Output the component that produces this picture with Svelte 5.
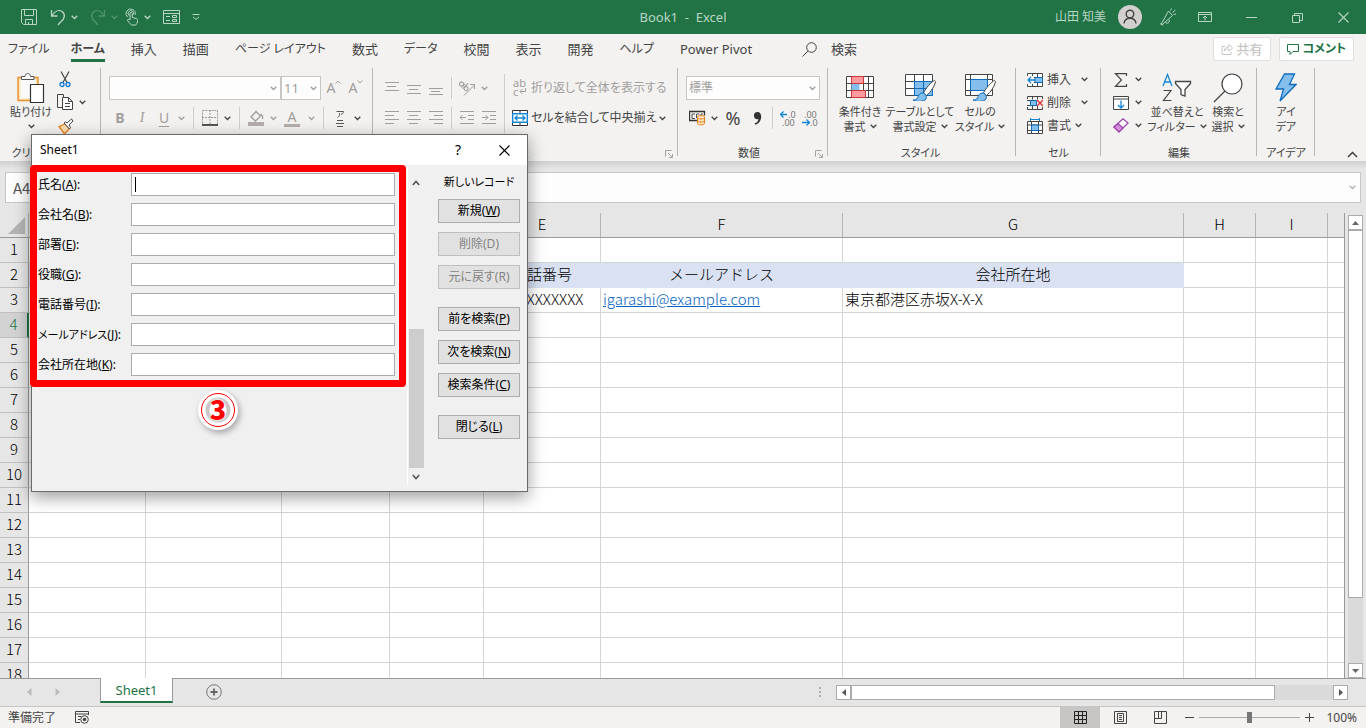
<script lang="ts">
  type Icon = { w: number; h: number; body: string };

  const alignIcon = (lines: [number, number, number][]): Icon => ({
    w: 14,
    h: 14,
    body: `<path stroke="currentColor" fill="none" d="${lines.map(([x, y, w]) => `M${x} ${y}.5h${w}`).join('')}"/>`
  });

  const tableGrid = (xs: number[], ys: number[]) =>
    `<path d="M.5.5h27v21H.5z${ys.map((y) => `M.5 ${y}.5h27`).join('')}${xs.map((x) => `M${x}.5.5v21`).join('')}" fill="#fff" stroke="#444"/>`;
  const brush = '<path d="M29.500 6.500c-3 1-9 8-11 12.500l3 2.500c4-3 8.500-10 9-14z" fill="#fff" stroke="#444"/><path d="M18.500 19c-4.500-.5-5 3-6 5-1 1.500-2.500 2-4.500 2 3 2 11 2 13-1 1-2 0-5-2.500-6z" fill="#83beec" stroke="#0f6cbd"/>';

  const icons: Record<string, Icon> = {
    save: { w: 18, h: 18, body: '<path d="M1.500 1.500h15v15h-13l-2-2zM4.500 1.500v6h9v-6M5.500 16.500v-5h7v5M8.500 14v2.500" fill="none" stroke="currentColor"/>' },
    undo: { w: 16, h: 18, body: '<path d="M1.500 2v6h6M2 7.500C5 3 9 1.500 12 3.500c3.500 2.500 3 7-1 10L8 17" fill="none" stroke="currentColor" stroke-width="1.300"/>' },
    redo: { w: 16, h: 18, body: '<path d="M14.500 2v6h-6M14 7.500C11 3 7 1.500 4 3.500c-3.500 2.500-3 7 1 10L8 17" fill="none" stroke="currentColor" stroke-width="1.300"/>' },
    touch: { w: 14, h: 18, body: '<path d="M2.500 9A4.600 4.600 0 1 1 10 7M4 7.500a2.800 2.800 0 1 1 4.500-1M5 12V5.500c0-1.500 2.300-1.500 2.300 0V9.500l4 1c1.200.3 1.200 1 1.200 2 0 2-1 4.500-2 4.500H6.500C5 16 3.500 14 2.500 12.500c0-1.500 1.500-1.500 2.500-.5z" fill="none" stroke="currentColor"/>' },
    form: { w: 17, h: 16, body: '<path d="M.5 1.500h16v13H.5zM.5 4.500h16M3 7.500h4M3 11.500h4M9.500 6.500h4v2h-4zM9.500 10.500h4v2h-4z" fill="none" stroke="currentColor"/>' },
    more: { w: 8, h: 7, body: '<path d="M.5.500h7M1 3l3 2.500L7 3" fill="none" stroke="currentColor"/>' },
    mega: { w: 18, h: 18, body: '<path d="M2 16.500 9.500 3l4 4.500L3.500 16.500zM1.500 15l2.500 2.500M6.500 13.500c.5 3 5 2 3.500-2M11.500 2.500l1-2M13.500 4.500l3-2.500M14.500 6.500l2.500-.5" fill="none" stroke="currentColor"/>' },
    ribbon: { w: 14, h: 12, body: '<path d="M.5 1.500h13v9H.5zM.5 3.500h13M7 9.500V5.500M5 7l2-2 2 2" fill="none" stroke="currentColor"/>' },
    min: { w: 11, h: 11, body: '<path d="M0 5.500h11" stroke="currentColor"/>' },
    restore: { w: 11, h: 11, body: '<path d="M.5 3.500h7v7h-7zM2.500 3.500v-2h8v7h-3" fill="none" stroke="currentColor"/>' },
    close: { w: 11, h: 11, body: '<path d="m.5.5 10 10M10.500.500l-10 10" stroke="currentColor" stroke-width="1.100"/>' },
    user: { w: 24, h: 24, body: '<circle cx="12" cy="12" r="12" fill="#d2d0ce"/><circle cx="12" cy="9" r="3.800" fill="none" stroke="#444" stroke-width="1.400"/><path d="M6 18.500c1-7 11-7 12 0" fill="none" stroke="#444" stroke-width="1.400"/>' },
    search: { w: 15, h: 15, body: '<circle cx="9.500" cy="5.500" r="4.800" fill="none" stroke="currentColor"/><path d="m6 9-5.500 5.500" stroke="currentColor"/>' },
    share: { w: 12, h: 12, body: '<path d="M4 3.500H1v8h9V9M3 8c.5-3 2.500-4 5-4V1.500l3.500 3.500L8 8.500V6C6 6 4.500 6.500 3 8z" fill="none" stroke="currentColor"/>' },
    comment: { w: 12, h: 11, body: '<path d="M.5.500h11v7H6l-3 3v-3H.5z" fill="none" stroke="currentColor"/>' },
    paste: { w: 28, h: 32, body: '<path d="M1 5.500h20v23H1z" fill="#fce4b8" stroke="#e8912d" stroke-width="1.400"/><path d="M3.500 7.500h15v19h-15z" fill="#fafafa"/><path d="M4.500 7.500v-3h3.500c0-4 5.500-4 5.500 0h3.500v3z" fill="#fafafa" stroke="#555"/><path d="M13.500 12.500h13v18h-13z" fill="#fff" stroke="#333" stroke-width="1.200"/>' },
    cut: { w: 12, h: 17, body: '<path d="m2 .5 6 11M10 .5 4 11.500" stroke="#444" stroke-width="1.200"/><circle cx="3" cy="13.500" r="2" fill="none" stroke="#0f78d4" stroke-width="1.300"/><circle cx="9" cy="13.500" r="2" fill="none" stroke="#0f78d4" stroke-width="1.300"/>' },
    copy: { w: 17, h: 17, body: '<path d="M5 13.500H.5V.500h6V3" fill="none" stroke="#444"/><path d="M5.500 3.500h6l4 4v8h-10zM11.500 3.500v4h4M8 9.500h5M8 12.500h5" fill="#fff" stroke="#444"/>' },
    painter: { w: 17, h: 16, body: '<path d="M2 8.500 8 6l4.500 4.500-5 5.500z" fill="#f9dcb0" stroke="#e8811c" stroke-width="1.300"/><path d="m7 5 5.500 6 1-1.500-1.500-2.500L16 3l-1.500-2L10 5 8.500 4z" fill="#fff" stroke="#444"/>' },
    borders: { w: 16, h: 16, body: '<path d="M.5.500h15v14H.5zM8 0v15M0 7.500h16" fill="none" stroke="#999" stroke-dasharray="2 1"/><path d="M0 15h16" stroke="#333" stroke-width="1.600"/>' },
    fill: { w: 16, h: 16, body: '<path d="M3 7 8 1.500l4.500 4.500-5 5zM8 2V.5M12.500 4.500c2 .5 2.500 2 2 4.500" fill="none" stroke="currentColor" stroke-width="1.300"/><path d="M0 12h16v4H0z" fill="#b3aeaa"/>' },
    ruby: { w: 10, h: 17, body: '<path d="M1.500 1.500h7c0 1.500-1 2.500-2.500 3M4.500 3v1.500c0 1.500-1 2.500-2 3" fill="none" stroke="#555"/><path d="M2 10.500h6M1 13.500h8M2 16.500h6" stroke="#555"/>' },
    alignTop: alignIcon([[0, 1, 14], [2, 5, 9], [0, 9, 14]]),
    alignMiddle: alignIcon([[0, 4, 14], [2, 8, 9], [0, 12, 14]]),
    alignBottom: alignIcon([[0, 7, 14], [2, 10, 9], [0, 13, 14]]),
    alignLeft: alignIcon([[0, 0, 14], [0, 4, 9], [0, 8, 14], [0, 12, 9]]),
    alignCenter: alignIcon([[0, 0, 14], [2, 4, 9], [0, 8, 14], [2, 12, 9]]),
    alignRight: alignIcon([[0, 0, 14], [5, 4, 9], [0, 8, 14], [5, 12, 9]]),
    orient: { w: 17, h: 16, body: '<path d="m5 15.500 10.500-10.500M11 4.500h4.500V9" fill="none" stroke="currentColor"/><g transform="rotate(45 5 5)" fill="none" stroke="currentColor" stroke-width="1.100"><circle cx="2.500" cy="6" r="2"/><path d="M4.800 3.500v5M6.800 1v7.500"/><circle cx="9" cy="6" r="2"/></g>' },
    outdent: { w: 15, h: 14, body: '<path d="M0 .5h14M8 4.500h6M8 8.500h6M0 12.500h14M0 6.500h6M2.500 4 0 6.500 2.500 9" fill="none" stroke="currentColor"/>' },
    indent: { w: 15, h: 14, body: '<path d="M0 .5h14M8 4.500h6M8 8.500h6M0 12.500h14M0 6.500h6M3.500 4 6 6.500 3.500 9" fill="none" stroke="currentColor"/>' },
    wrap: { w: 16, h: 18, body: '<g font-size="11" font-family="Noto Sans" fill="currentColor"><text x="1" y="8">ab</text><text x="1" y="17">c</text></g><path d="M13.500 9v3.500H8M10.500 10 8 12.500l2.500 2.500" fill="none" stroke="currentColor"/>' },
    merge: { w: 16, h: 16, body: '<path d="M.5.500h15v15H.5zM8 .5v3M8 12.500v3" fill="#fff" stroke="#333"/><path d="M.7 3.700h14.600v8.600H.7z" fill="#fff" stroke="#1587d6" stroke-width="1.400"/><path d="M3 8h10M5.500 5.500 3 8l2.500 2.500M10.500 5.500 13 8l-2.500 2.500" fill="none" stroke="#1587d6" stroke-width="1.300"/>' },
    money: { w: 17, h: 16, body: '<path d="M8 10.500H.5v-9h15v4" fill="none" stroke="#333" stroke-width="1.300"/><path d="M6 4H3v4.500h3M7.500 8V4h3M12 6V4h2" fill="none" stroke="#555"/><path d="M8.500 7v6c0 2.500 7 2.500 7 0V7c0-2-7-2-7 0zM8.500 7.500c0 2 7 2 7 0M8.500 10.500c0 2 7 2 7 0" fill="#fde3c3" stroke="#e8811c"/>' },
    comma: { w: 9, h: 13, body: '<path d="M4.500 0a3.500 3.500 0 0 0 0 7.200c.5 0 .8 0 1-.2-.3 2-1.500 3.500-4 4.500l.8 1.200C6 11.500 8.200 8.500 8.200 4.500 8.200 1.800 6.800 0 4.500 0z" fill="#333"/>' },
    decMore: { w: 17, h: 17, body: '<g font-size="9" font-family="Noto Sans" fill="#777"><text x="8" y="8">.0</text><text x="2" y="16">.00</text></g><path d="M7 4.500H.8M3.500 1.500l-3 3 3 3" fill="none" stroke="#1587d6" stroke-width="1.300"/>' },
    decLess: { w: 17, h: 17, body: '<g font-size="9" font-family="Noto Sans" fill="#777"><text x="2" y="8">.00</text><text x="8" y="16">.0</text></g><path d="M0 12.500h7M4.500 9.500l3 3-3 3" fill="none" stroke="#1587d6" stroke-width="1.300"/>' },
    conditional: { w: 28, h: 24, body: `${tableGrid([5, 17, 22], [7, 14])}<path d="M5.500.500h12v7h-12zM5.500 14.500h14v7h-14z" fill="#ff9a9e" stroke="#d13438"/><path d="M5.500 8h8v6h-8z" fill="#83beec"/>` },
    tableFormat: { w: 31, h: 27, body: `${tableGrid([9, 18], [7, 14])}<path d="M9.500 7.500h18v14h-18zM9.500 14.500h18M18.500 7.500v14" fill="#83beec" stroke="#0f6cbd"/>${brush}` },
    cellStyle: { w: 31, h: 27, body: `${tableGrid([5, 22], [5, 16])}<path d="M5.500 5.500h17v11h-17z" fill="#83beec" stroke="#0f6cbd"/>${brush}` },
    insertCells: { w: 16, h: 14, body: '<path d="M.5.500h15v13H.5zM.5 4.500h15M.5 9.500h15M5.500.5v13M10.500.5v13" fill="#fff" stroke="#444"/><path d="M8 4.500h7.500v5H8z" fill="#83beec" stroke="#0f6cbd"/><path d="M0 3h7v8H0z" fill="#f3f2f1"/><path d="M8 7H1M4 4 1 7l3 3" fill="none" stroke="#1587d6" stroke-width="1.300"/>' },
    deleteCells: { w: 16, h: 14, body: '<path d="M.5 3V.500h15V3M.5 11v2.500h15V11M5.500.5v3M10.500.5v3M5.500 10v3.500M10.500 10v3.500M0 4.500h5M0 9.500h5" fill="none" stroke="#444"/><path d="M3.500 4.500h6v5h-6z" fill="#83beec" stroke="#0f6cbd"/><path d="m10 4 6 6M16 4l-6 6" stroke="#e03b3b" stroke-width="1.500"/>' },
    formatCells: { w: 16, h: 16, body: '<path d="M.5 3.500h15v12H.5zM.5 7h15M.5 12.500h15M4.500 3.500v12M11.500 3.500v12" fill="#fff" stroke="#444"/><path d="M4.500 7h7v5.500h-7z" fill="#83beec" stroke="#0f6cbd"/><path d="M3.500 0v3M12.500 0v3M3.500 1.500h9" stroke="#1587d6"/>' },
    sum: { w: 14, h: 14, body: '<path d="M12.500 3V.700H1.500L7.500 7l-6 6.300h11V11" fill="none" stroke="#444" stroke-width="1.200"/>' },
    fillDown: { w: 16, h: 14, body: '<path d="M.5.500h15v13H.5zM.5 3h15" fill="#fff" stroke="#444"/><path d="M8 4.500V12M5 9l3 3 3-3" fill="none" stroke="#1587d6" stroke-width="1.300"/>' },
    eraser: { w: 16, h: 15, body: '<path d="M1 9 10 .800 15 5 6 14z" fill="#fff" stroke="#9b3fa8" stroke-width="1.200"/><path d="M1 9 5 5.500 10 10l-4 4z" fill="#d48fdb" stroke="#9b3fa8" stroke-width="1.200"/>' },
    sort: { w: 30, h: 30, body: '<path d="m1 13 4.500-11.500L10 13M2.500 9h6" fill="none" stroke="#1587d6" stroke-width="1.300"/><path d="M1.500 17.500H9L1.500 27.500H9.500" fill="none" stroke="#444" stroke-width="1.200"/><path d="M13.500 8.500h15v2l-5.500 6v6.500l-4-1.500v-5l-5.500-6z" fill="#fff" stroke="#444" stroke-width="1.300"/>' },
    find: { w: 30, h: 30, body: '<circle cx="19" cy="11" r="10" fill="#fff" stroke="#444" stroke-width="1.200"/><path d="m12 18-11 11" stroke="#444" stroke-width="1.300"/>' },
    ideas: { w: 22, h: 29, body: '<path d="M9.500 1h10l-5 10.500h6.500L5 28l3.500-12H1z" fill="#83beec" stroke="#0f6cbd" stroke-width="1.300"/>' },
    launcher: { w: 8, h: 8, body: '<path d="M.5 6.500v-6h6M3 3l4 4M7.500 4v3.500H4" fill="none" stroke="#a5a3a1"/>' },
    collapse: { w: 11, h: 7, body: '<path d="m1 6 4.500-4.500L10 6" fill="none" stroke="#333" stroke-width="1.300"/>' },
    macro: { w: 15, h: 13, body: '<path d="M5 11.500H.5V.500h13V4M.5 3h13M3 5.500h3M3 8.500h2" fill="none" stroke="#444"/><circle cx="9.500" cy="8.500" r="3.800" fill="none" stroke="#444"/><circle cx="9.500" cy="8.500" r="1.800" fill="#444"/>' },
    addSheet: { w: 16, h: 16, body: '<circle cx="8" cy="8" r="7.300" fill="none" stroke="#777"/><path d="M4.500 8h7M8 4.500v7" stroke="#666" stroke-width="1.800"/>' },
    viewNormal: { w: 13, h: 13, body: '<path d="M.5.500h12v12H.5zM.5 4.500h12M.5 8.500h12M4.500.5v12M8.500.5v12" fill="none" stroke="#222"/>' },
    viewPage: { w: 13, h: 13, body: '<path d="M.5.500h12v12H.5zM3.500 2.500h6v8h-6zM5 4.500h3M5 6.500h3M5 8.500h3" fill="none" stroke="#444"/>' },
    viewBreak: { w: 13, h: 13, body: '<path d="M.5.500h12v12H.5zM.5 7.500h7v-7M4.500.5v7" fill="none" stroke="#444"/>' }
  };

  const tabs = ['ファイル', 'ホーム', '挿入', '描画', 'ページ レイアウト', '数式', 'データ', '校閲', '表示', '開発', 'ヘルプ', 'Power Pivot'];
  const isKana = (text: string) => /^[ァ-ー ]+$/.test(text);

  const columns = [
    { name: 'A', width: 117 },
    { name: 'B', width: 136 },
    { name: 'C', width: 108 },
    { name: 'D', width: 94 },
    { name: 'E', width: 117 },
    { name: 'F', width: 242 },
    { name: 'G', width: 341 },
    { name: 'H', width: 72 },
    { name: 'I', width: 72 }
  ];
  const rows = Array.from({ length: 18 }, (_, i) => i + 1);
  const cells: Record<string, string> = {
    E2: '電話番号',
    F2: 'メールアドレス',
    G2: '会社所在地',
    E3: 'XXXXXXXXXXXX',
    G3: '東京都港区赤坂X-X-X'
  };

  const fields = [
    { label: '氏名', key: 'A' },
    { label: '会社名', key: 'B' },
    { label: '部署', key: 'E' },
    { label: '役職', key: 'G' },
    { label: '電話番号', key: 'I' },
    { label: 'メールアドレス', key: 'J' },
    { label: '会社所在地', key: 'K' }
  ];

  const commands = [
    [
      { label: '新規', key: 'W', disabled: false },
      { label: '削除', key: 'D', disabled: true },
      { label: '元に戻す', key: 'R', disabled: true }
    ],
    [
      { label: '前を検索', key: 'P', disabled: false },
      { label: '次を検索', key: 'N', disabled: false },
      { label: '検索条件', key: 'C', disabled: false }
    ],
    [{ label: '閉じる', key: 'L', disabled: false }]
  ];

  let activeTab = $state('ホーム');
  let record = $state<Record<string, string>>({});
  let zoom = $state(50);
</script>

{#snippet icon(name: string)}
  {@const i = icons[name]}
  <svg width={i.w} height={i.h} viewBox="0 0 {i.w} {i.h}" aria-hidden="true">{@html i.body}</svg>
{/snippet}

{#snippet chevron()}
  <svg class="chevron" width="7" height="5" viewBox="0 0 7 5" aria-hidden="true"><path d="m.7.7 2.800 2.800L6.300.7" fill="none" stroke="currentColor" stroke-width="1.300" /></svg>
{/snippet}

{#snippet drop(label: string, disabled = false)}
  <button class="drop" type="button" aria-label={label} {disabled}>{@render chevron()}</button>
{/snippet}

{#snippet tool(name: string, label: string, disabled = false)}
  <button class="tool" type="button" aria-label={label} {disabled}>{@render icon(name)}</button>
{/snippet}

{#snippet big(name: string, line1: string, line2: string, hasMenu = true)}
  <button class="big" type="button">
    <span class="pic">{@render icon(name)}</span>
    <span>{line1}</span>
    <span class="line">{line2}{#if hasMenu}{@render chevron()}{/if}</span>
  </button>
{/snippet}

<div class="app">
  <header class="titlebar">
    <div class="quick">
      <button class="save" type="button" aria-label="上書き保存">{@render icon('save')}</button>
      <button type="button" aria-label="元に戻す">{@render icon('undo')}{@render chevron()}</button>
      <button class="faded" type="button" aria-label="やり直し">{@render icon('redo')}{@render chevron()}</button>
      <button type="button" aria-label="タッチ/マウス モード">{@render icon('touch')}{@render chevron()}</button>
      <button type="button" aria-label="フォーム">{@render icon('form')}</button>
      <button type="button" aria-label="クイック アクセス ツール バー">{@render icon('more')}</button>
    </div>
    <div class="doc">Book1&nbsp; -&nbsp; Excel</div>
    <div class="window">
      <span>山田 知美</span>
      <button class="avatar" type="button" aria-label="アカウント">{@render icon('user')}</button>
      <button class="narrow" type="button" aria-label="新機能">{@render icon('mega')}</button>
      <button type="button" aria-label="リボンの表示オプション">{@render icon('ribbon')}</button>
      <button type="button" aria-label="最小化">{@render icon('min')}</button>
      <button type="button" aria-label="元のサイズに戻す">{@render icon('restore')}</button>
      <button type="button" aria-label="終了">{@render icon('close')}</button>
    </div>
  </header>

  <nav class="tabs">
    {#each tabs as tab}
      <button type="button" class:active={tab === activeTab} class:kana={isKana(tab)} onclick={() => (activeTab = tab)}>{tab}</button>
    {/each}
    <button class="search" type="button">{@render icon('search')}検索</button>
    <div class="actions">
      <button class="share" type="button" disabled>{@render icon('share')}共有</button>
      <button class="comment kana" type="button">{@render icon('comment')}コメント</button>
    </div>
  </nav>

  <div class="ribbon">
    <section class="group clipboard">
      <div class="content">
        <button class="big" type="button">
          <span class="pic">{@render icon('paste')}</span>
          <span>貼り付け</span>
          <span class="line">{@render chevron()}</span>
        </button>
        <div class="stack">
          <div>{@render tool('cut', '切り取り')}</div>
          <div>{@render tool('copy', 'コピー')}{@render drop('コピーのオプション')}</div>
          <div>{@render tool('painter', '書式のコピー/貼り付け')}</div>
        </div>
      </div>
      <h2 class="launch">クリップボード</h2>
    </section>

    <section class="group font">
      <div class="lines">
        <div class="row">
          <span class="combo family"><select aria-label="フォント" disabled><option></option></select>{@render chevron()}</span>
          <span class="combo size"><select aria-label="フォント サイズ" disabled><option>11</option></select>{@render chevron()}</span>
          <button class="tool letter" type="button" aria-label="フォント サイズの拡大" disabled>A<svg width="6" height="4" viewBox="0 0 6 4"><path d="M.5 3.500 3 1l2.500 2.500" fill="none" stroke="currentColor" /></svg></button>
          <button class="tool letter" type="button" aria-label="フォント サイズの縮小" disabled>A<svg width="6" height="4" viewBox="0 0 6 4"><path d="M.5.5 3 3 5.500.5" fill="none" stroke="currentColor" /></svg></button>
        </div>
        <div class="row">
          <button class="tool bold" type="button" disabled>B</button>
          <button class="tool italic" type="button" disabled>I</button>
          <button class="tool under" type="button" disabled>U</button>
          {@render drop('下線', true)}
          <i class="sep"></i>
          {@render tool('borders', '罫線')}
          {@render drop('罫線の種類')}
          <i class="sep"></i>
          {@render tool('fill', '塗りつぶしの色', true)}
          {@render drop('塗りつぶしの色の選択', true)}
          <button class="tool color" type="button" aria-label="フォントの色" disabled><span>A</span></button>
          {@render drop('フォントの色の選択', true)}
          <i class="sep"></i>
          {@render tool('ruby', 'ふりがな')}
          {@render drop('ふりがなの設定')}
        </div>
      </div>
      <h2 class="launch">フォント</h2>
    </section>

    <section class="group align">
      <div class="content">
        <div class="lines">
          <div class="row">
            {@render tool('alignTop', '上揃え', true)}
            {@render tool('alignMiddle', '上下中央揃え', true)}
            {@render tool('alignBottom', '下揃え', true)}
            <i class="sep tight"></i>
            {@render tool('orient', '方向', true)}
            {@render drop('方向の選択', true)}
          </div>
          <div class="row">
            {@render tool('alignLeft', '左揃え', true)}
            {@render tool('alignCenter', '中央揃え', true)}
            {@render tool('alignRight', '右揃え', true)}
            <i class="sep tight"></i>
            {@render tool('outdent', 'インデントを減らす', true)}
            {@render tool('indent', 'インデントを増やす', true)}
          </div>
        </div>
        <div class="lines wrapping">
          <div class="row"><button class="text" type="button" disabled>{@render icon('wrap')}折り返して全体を表示する</button></div>
          <div class="row"><button class="text" type="button">{@render icon('merge')}セルを結合して中央揃え</button>{@render drop('結合の種類')}</div>
        </div>
      </div>
      <h2 class="launch">配置</h2>
      <span class="launcher">{@render icon('launcher')}</span>
    </section>

    <section class="group number">
      <div class="lines">
        <div class="row">
          <span class="combo format"><select aria-label="数値の書式" disabled><option>標準</option></select>{@render chevron()}</span>
        </div>
        <div class="row">
          {@render tool('money', '通貨表示形式')}
          {@render drop('通貨の選択')}
          <button class="tool percent" type="button">%</button>
          {@render tool('comma', '桁区切りスタイル')}
          <i class="sep tight"></i>
          {@render tool('decMore', '小数点以下の表示桁数を増やす')}
          {@render tool('decLess', '小数点以下の表示桁数を減らす')}
        </div>
      </div>
      <h2 class="launch">数値</h2>
      <span class="launcher">{@render icon('launcher')}</span>
    </section>

    <section class="group styles">
      <div class="content">
        {@render big('conditional', '条件付き', '書式')}
        {@render big('tableFormat', 'テーブルとして', '書式設定')}
        {@render big('cellStyle', 'セルの', 'スタイル')}
      </div>
      <h2>スタイル</h2>
    </section>

    <section class="group cellgroup">
      <div class="stack">
        <div><button class="text" type="button">{@render icon('insertCells')}挿入</button>{@render drop('セルの挿入')}</div>
        <div><button class="text" type="button">{@render icon('deleteCells')}削除</button>{@render drop('セルの削除')}</div>
        <div><button class="text" type="button">{@render icon('formatCells')}書式{@render chevron()}</button></div>
      </div>
      <h2>セル</h2>
    </section>

    <section class="group edit">
      <div class="content">
        <div class="stack">
          <div>{@render tool('sum', 'オート SUM')}{@render drop('関数の選択')}</div>
          <div>{@render tool('fillDown', 'フィル')}{@render drop('フィルの方向')}</div>
          <div>{@render tool('eraser', 'クリア')}{@render drop('クリアの種類')}</div>
        </div>
        {@render big('sort', '並べ替えと', 'フィルター')}
        {@render big('find', '検索と', '選択')}
      </div>
      <h2>編集</h2>
    </section>

    <section class="group ideas">
      <div class="content">{@render big('ideas', 'アイ', 'デア', false)}</div>
      <h2>アイデア</h2>
    </section>

    <button class="collapse" type="button" aria-label="リボンを折りたたむ">{@render icon('collapse')}</button>
  </div>

  <div class="formula">
    <input class="name" aria-label="名前ボックス" value="A4" />
    <div class="bar"><input aria-label="数式バー" />{@render chevron()}</div>
  </div>

  <main class="sheet">
    <div class="grid">
      <table>
        <colgroup>
          <col class="rowcol" />
          {#each columns as column}<col style:width="{column.width}px" />{/each}
          <col />
        </colgroup>
        <thead>
          <tr>
            <th class="corner"><svg width="18" height="18" viewBox="0 0 18 18" aria-hidden="true"><path d="M17 0v17H0z" fill="#b4b4b4" /></svg></th>
            {#each columns as column}<th scope="col">{column.name}</th>{/each}
            <th></th>
          </tr>
        </thead>
        <tbody>
          {#each rows as row}
            <tr class:current={row === 4} class:heading={row === 2}>
              <th scope="row">{row}</th>
              {#each columns as column}
                <td class:filled={row === 2 && column.name < 'H'}>
                  {#if row === 3 && column.name === 'F'}
                    <a href="mailto:igarashi@example.com">igarashi@example.com</a>
                  {:else}
                    {cells[column.name + row] ?? ''}
                  {/if}
                </td>
              {/each}
              <td></td>
            </tr>
          {/each}
        </tbody>
      </table>
    </div>
    <div class="vscroll">
      <button type="button" aria-label="上へスクロール"><svg width="7" height="4" viewBox="0 0 7 4"><path d="M0 4h7L3.500 0z" fill="#666" /></svg></button>
      <div class="track"><div class="thumb"></div></div>
      <button type="button" aria-label="下へスクロール"><svg width="7" height="4" viewBox="0 0 7 4"><path d="M0 0h7L3.500 4z" fill="#666" /></svg></button>
    </div>
  </main>

  <div class="sheetbar">
    <div class="arrows">
      <svg width="5" height="8" viewBox="0 0 5 8"><path d="M4.500 0v8L0 4z" fill="#bbb" /></svg>
      <svg width="5" height="8" viewBox="0 0 5 8"><path d="M.5 0v8L5 4z" fill="#bbb" /></svg>
    </div>
    <button class="sheettab" type="button">Sheet1</button>
    <button class="add" type="button" aria-label="新しいシート">{@render icon('addSheet')}</button>
    <svg class="dots" width="2" height="11" viewBox="0 0 2 11"><path d="M0 0h2v2H0zM0 4h2v2H0zM0 8h2v2H0z" fill="#aaa" /></svg>
    <div class="hscroll">
      <button type="button" aria-label="左へスクロール"><svg width="4" height="7" viewBox="0 0 4 7"><path d="M4 0v7L0 3.500z" fill="#555" /></svg></button>
      <div class="track"><div class="thumb"></div></div>
      <button type="button" aria-label="右へスクロール"><svg width="4" height="7" viewBox="0 0 4 7"><path d="M0 0v7l4-3.500z" fill="#555" /></svg></button>
    </div>
  </div>

  <footer class="status">
    <span>準備完了</span>
    <button class="macro" type="button" aria-label="マクロの記録">{@render icon('macro')}</button>
    <div class="views">
      <button class="on" type="button" aria-label="標準">{@render icon('viewNormal')}</button>
      <button type="button" aria-label="ページ レイアウト">{@render icon('viewPage')}</button>
      <button type="button" aria-label="改ページ プレビュー">{@render icon('viewBreak')}</button>
    </div>
    <button class="step" type="button" aria-label="縮小"><svg width="9" height="9" viewBox="0 0 9 9"><path d="M0 4.500h9" stroke="#444" /></svg></button>
    <input type="range" aria-label="ズーム" min="0" max="100" bind:value={zoom} />
    <button class="step" type="button" aria-label="拡大"><svg width="9" height="9" viewBox="0 0 9 9"><path d="M0 4.500h9M4.500 0v9" stroke="#444" /></svg></button>
    <span class="percentage">100%</span>
  </footer>

  <div class="dialog" role="dialog" aria-labelledby="form-title">
    <div class="caption">
      <h1 id="form-title">Sheet1</h1>
      <button type="button" aria-label="ヘルプ">?</button>
      <button type="button" aria-label="閉じる">{@render icon('close')}</button>
    </div>
    <div class="body">
      <div class="fields">
        {#each fields as field}
          <div class="field">
            <label for="field-{field.key}"><span class:kana={isKana(field.label)}>{field.label}</span>(<u>{field.key}</u>):</label>
            <div class="box">
              {#if field.key === 'A'}<span class="caret"></span>{/if}
              <input id="field-{field.key}" bind:value={record[field.key]} />
            </div>
          </div>
        {/each}
      </div>
      <div class="records">
        <svg width="8" height="6" viewBox="0 0 8 6"><path d="m.8 5 3.200-3.500L7.200 5" fill="none" stroke="#555" stroke-width="1.600" /></svg>
        <div class="thumb"></div>
        <svg width="8" height="6" viewBox="0 0 8 6"><path d="M.8 1 4 4.500 7.200 1" fill="none" stroke="#555" stroke-width="1.600" /></svg>
      </div>
      <div class="commands">
        <p>新しいレコード</p>
        {#each commands as set}
          <div class="set">
            {#each set as command}
              <button type="button" disabled={command.disabled}>
                {command.label}({#if command.disabled}{command.key}{:else}<u>{command.key}</u>{/if})
              </button>
            {/each}
          </div>
        {/each}
      </div>
    </div>
    <div class="frame"></div>
    <div class="badge"><span>3</span></div>
  </div>
</div>

<style>
  :global(body) { margin: 0; overflow: hidden; }
  .app { position: relative; display: flex; flex-direction: column; height: 100vh; background: #e6e6e6; color: #444; font: 12px/16px 'Noto Sans', 'Noto Sans CJK JP', sans-serif; font-feature-settings: 'palt'; white-space: nowrap; }
  .app * { box-sizing: border-box; }
  button { display: inline-flex; align-items: center; justify-content: center; margin: 0; border: 0; background: none; color: inherit; font: inherit; font-feature-settings: inherit; padding: 0; }
  button:disabled { color: #a19f9d; }
  svg { display: block; flex: none; }
  h1, h2, p { margin: 0; font: inherit; }

  .titlebar { display: flex; align-items: center; flex: none; height: 34px; background: #217346; color: #b8d6c4; }
  .quick { display: flex; align-items: center; flex: 1; gap: 12px; }
  .quick button { gap: 5px; }
  .quick .save { margin-left: 20px; }
  .quick .faded { color: #4f9470; margin-right: -5px; }
  .doc { font-size: 13px; }
  .window { display: flex; align-items: center; justify-content: flex-end; flex: 1; }
  .window button { width: 46px; height: 34px; }
  .window .narrow { width: 28px; }
  .window .avatar { width: 48px; }

  .tabs { display: flex; align-items: center; flex: none; gap: 26px; height: 30px; background: #f3f2f1; font-size: 13px; line-height: 20px; padding: 0 12px 0 8px; }
  .tabs .kana { font-size: 12px; line-height: 22px; }
  .tabs > button { height: 26px; border-block: 3px solid transparent; }
  .tabs > button:first-child { margin-right: -5px; }
  .tabs > .active { border-bottom-color: #217346; font-weight: 700; }
  .tabs .search { gap: 14px; margin-left: 24px; }
  .actions { display: flex; gap: 8px; margin-left: auto; }
  .actions button { gap: 4px; height: 24px; border: 1px solid #e1dfdd; border-radius: 2px; background: #fff; font-weight: 700; padding: 0 7px; }
  .actions .share { color: #c8c6c4; font-weight: 500; }
  .actions .comment { color: #217346; }

  .ribbon { display: flex; flex: none; height: 97px; background: #f3f2f1; }
  .group { position: relative; display: flex; flex-direction: column; flex: none; }
  .group::after { position: absolute; inset: 4px 0 5px auto; width: 1px; background: #b8b6b4; content: ''; }
  .group h2 { font-size: 11px; line-height: 16px; text-align: center; }
  .group .launch { padding-right: 16px; }
  .launcher { position: absolute; right: 5px; bottom: 3px; }
  .content { display: flex; flex: 1; }
  .lines { display: flex; flex-direction: column; flex: 1; gap: 6px; padding-top: 12px; }
  .row { display: flex; align-items: center; height: 24px; }
  .stack { display: flex; flex-direction: column; flex: 1; padding-top: 4px; }
  .stack > div { display: flex; align-items: center; height: 23px; }
  .tool { width: 22px; height: 22px; font-size: 14px; }
  .drop { width: 12px; height: 22px; }
  .text { gap: 4px; }
  .sep { width: 12px; height: 22px; background: linear-gradient(#d0cecc, #d0cecc) center / 1px 100% no-repeat; }
  .sep.tight { width: 9px; }
  .big { flex-direction: column; justify-content: flex-start; width: 60px; font-size: 11px; line-height: 15px; padding-top: 7px; }
  .big .pic { display: flex; align-items: center; justify-content: center; height: 33px; }
  .big .line { display: flex; align-items: center; gap: 4px; min-height: 15px; }
  .combo { position: relative; display: flex; height: 24px; border: 1px solid #c8c6c4; background: #fdfdfd; }
  .combo select { width: 100%; border: 0; appearance: none; background: none; color: #a19f9d; font: inherit; opacity: 1; padding: 0 2px; }
  .combo .chevron { position: absolute; top: 9px; right: 3px; color: #a19f9d; }

  .clipboard { width: 101px; }
  .clipboard .launch { padding: 0 10px 0 0; }
  .clipboard .big { width: 46px; margin-left: 8px; }
  .font { width: 272px; padding-left: 8px; }
  .family { width: 172px; }
  .size { width: 40px; font-size: 13px; }
  .size + .letter { margin-left: 2px; }
  .letter svg { align-self: flex-start; margin-top: 3px; }
  .bold { font-weight: 700; }
  .italic { font-family: 'Liberation Serif', serif; font-style: italic; }
  .under { text-decoration: underline; text-underline-offset: 3px; }
  .color { width: 26px; }
  .color span { border-bottom: 3px solid #b3aeaa; line-height: 14px; padding: 0 4px; }
  .align { width: 305px; }
  .align .lines { flex: none; padding-left: 8px; }
  .align .wrapping { position: relative; margin-left: 4px; }
  .wrapping::before { position: absolute; inset: 10px auto 12px 0; width: 1px; background: #d0cecc; content: ''; }
  .wrapping .text { gap: 3px; }
  .number { width: 150px; padding-left: 8px; }
  .format { width: 134px; }
  .number .percent { width: 26px; font-size: 18px; }
  .styles { width: 188px; padding: 0 5px 0 2px; }
  .cellgroup { width: 85px; }
  .cellgroup .stack { padding-left: 11px; }
  .cellgroup .drop { margin-left: 7px; }
  .edit { width: 156px; }
  .edit .stack { padding-left: 9px; }
  .edit .big { width: 54px; }
  .edit .big:last-child { width: 48px; margin-right: 5px; }
  .ideas { width: 58px; }
  .collapse { align-self: flex-end; width: 11px; height: 14px; margin: 0 8px 0 auto; }

  .formula { display: flex; flex: none; gap: 8px; height: 52px; background: linear-gradient(#cfcfcf, #e6e6e6 8px); padding: 11px 5px 10px; }
  .name { width: 170px; border: 1px solid #c6c6c6; background: #fdfdfd; color: #555; font: 15px 'Noto Sans CJK JP', sans-serif; padding: 0 7px; }
  .bar { display: flex; align-items: center; flex: 1; border: 1px solid #c6c6c6; background: #fdfdfd; color: #b0b0b0; padding-right: 4px; }
  .bar input { flex: 1; border: 0; background: none; }

  .sheet { display: flex; flex: 1; min-height: 0; }
  .grid { flex: 1; min-width: 0; overflow: hidden; border-right: 1px solid #999; }
  table { table-layout: fixed; width: 100%; border-collapse: separate; border-spacing: 0; color: #000; font: 300 15px/22px 'Noto Sans CJK JP', sans-serif; font-feature-settings: normal; }
  .rowcol { width: 29px; }
  th { height: 25px; border-right: 1px solid #999; border-bottom: 1px solid #c0c0c0; background: #e6e6e6; font-weight: 300; padding: 0; vertical-align: top; }
  thead th { border-right-color: #b5b5b5; border-bottom-color: #999; }
  thead th:last-child { border-right: 0; }
  .corner svg { margin: 4px 0 0 8px; }
  td { height: 25px; overflow: hidden; border-right: 1px solid #d4d4d4; border-bottom: 1px solid #d4d4d4; background: #fff; padding: 0 2px; vertical-align: top; }
  td:last-child { border-right: 0; }
  td a { color: #0563c1; }
  .heading { text-align: center; }
  td.filled { border-color: #d9e1f2; background: #d9e1f2; }
  .current th { border-right: 2px solid #217346; background: #d2d2d2; color: #217346; }

  .vscroll { display: flex; flex-direction: column; flex: none; width: 21px; padding: 2px 3px 0 3px; }
  .vscroll button, .hscroll button { flex: none; width: 15px; height: 15px; border: 1px solid #ababab; background: #fff; }
  .vscroll .track { flex: 1; background: #dadada; }
  .vscroll .thumb { height: 85%; border: 1px solid #ababab; background: #fff; }

  .sheetbar { display: flex; flex: none; align-items: flex-start; height: 28px; border-top: 1px solid #999; }
  .arrows { display: flex; gap: 23px; width: 100px; padding: 9px 0 0 27px; }
  .sheettab { width: 73px; height: 25px; margin-top: -1px; border: 1px solid #999; border-top: 0; border-bottom: 2px solid #217346; background: #fff; color: #217346; font-size: 13px; }
  .add { margin: 5px 0 0 33px; }
  .dots { margin: 8px 15px 0 auto; }
  .hscroll { display: flex; width: 512px; margin: 6px 18px 0 0; }
  .hscroll .track { flex: 1; background: #dadada; }
  .hscroll .thumb { width: 88%; height: 15px; border: 1px solid #ababab; background: #fff; }

  .status { display: flex; flex: none; align-items: center; height: 22px; border-top: 1px solid #c6c6c6; background: #f3f2f1; padding: 0 9px 0 8px; }
  .macro { margin-left: 19px; }
  .views { display: flex; align-self: stretch; margin-left: auto; }
  .views button { width: 40px; }
  .views .on { background: #c8c6c4; }
  .step { width: 19px; }
  input[type='range'] { width: 101px; height: 12px; margin: 0; appearance: none; background: linear-gradient(#aaa, #aaa) center / 100% 1px no-repeat; }
  input[type='range']::-webkit-slider-thumb { width: 5px; height: 11px; appearance: none; background: #777; }
  .percentage { width: 38px; text-align: right; }

  .dialog { position: absolute; top: 134px; left: 31px; display: flex; flex-direction: column; width: 497px; height: 358px; border: 1px solid #6a6a6a; background: #f0f0f0; box-shadow: 0 5px 16px rgb(0 0 0 / 0.4); color: #000; }
  .caption { display: flex; align-items: center; flex: none; height: 30px; background: #fff; }
  .caption h1 { margin: 0 auto 0 8px; }
  .caption button { width: 46px; font-size: 14px; }
  .body { display: flex; flex: 1; min-height: 0; }
  .fields { display: flex; flex-direction: column; flex: 1; gap: 7px; padding: 8px 12px 0 6px; }
  .field { display: flex; height: 23px; }
  .field label { width: 93px; line-height: 23px; }
  .field .kana { font-size: 11px; }
  .box { display: flex; align-items: center; flex: 1; border: 1px solid #ababab; background: #fff; }
  .box input { flex: 1; min-width: 0; border: 0; outline: 0; background: none; }
  .caret { width: 1px; height: 15px; margin-left: 3px; background: #000; }
  .records { display: flex; flex-direction: column; align-items: center; justify-content: space-between; flex: none; width: 17px; border-left: 1px solid #fff; margin-bottom: 6px; padding: 15px 0 5px; }
  .records .thumb { width: 15px; height: 139px; margin: auto 0 6px; background: #cdcdcd; }
  .commands { display: flex; flex-direction: column; gap: 18px; width: 103px; padding: 9px 7px 0 14px; }
  .commands p { margin-bottom: -9px; font-size: 11px; text-align: center; }
  .set { display: flex; flex-direction: column; gap: 9px; }
  .set button { height: 24px; border: 1px solid #adadad; background: #e1e1e1; }
  .set button:disabled { border-color: #bfbfbf; color: #838383; }
  .frame { position: absolute; top: 30px; left: -2px; width: 376px; height: 222px; border: 7px solid #f00; border-radius: 4px; pointer-events: none; }
  .badge { position: absolute; top: 255px; left: 166px; display: flex; width: 40px; height: 40px; border-radius: 50%; background: #fff; box-shadow: 2px 3px 6px rgb(0 0 0 / 0.3); padding: 3px; }
  .badge span { display: flex; align-items: center; justify-content: center; flex: 1; border: 1px solid #f00; border-radius: 50%; background: radial-gradient(circle, #fff 8px, #c8c8c8 9px, #c8c8c8 12px, #fff 13px); color: #f00; font: 900 27px/24px 'Noto Sans CJK JP', sans-serif; text-shadow: 0 0 3px #fff, 0 0 3px #fff; padding-bottom: 3px; }
</style>
